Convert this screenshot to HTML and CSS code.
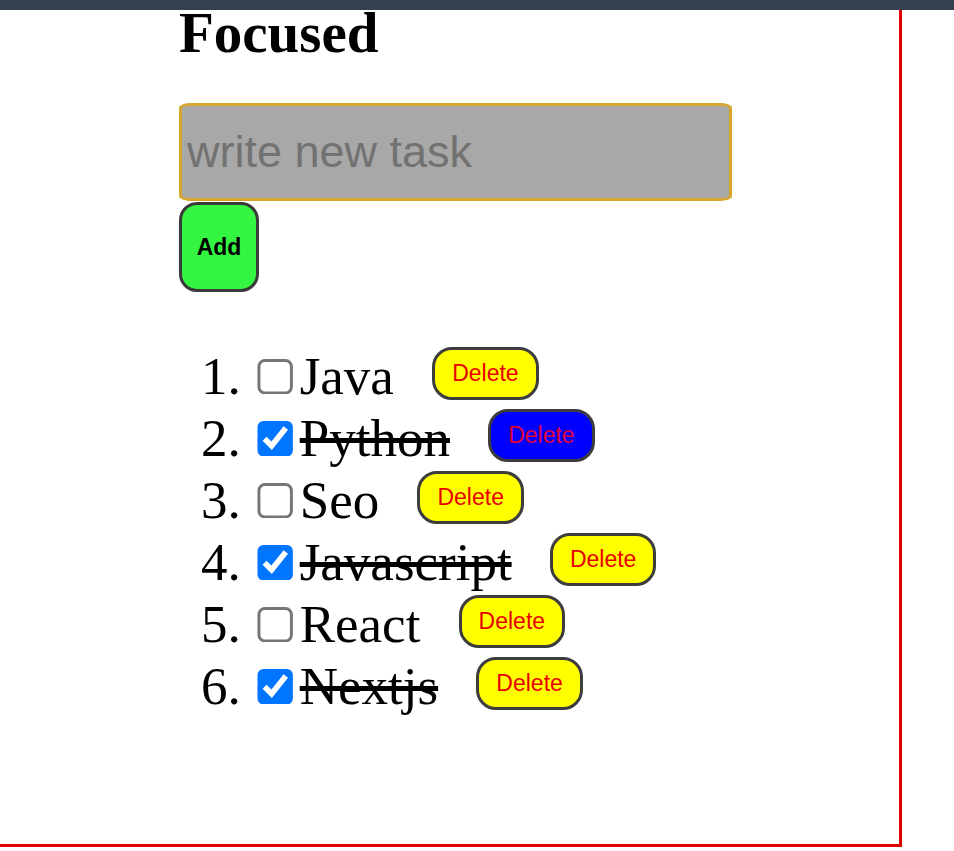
FILE: index.html
```html
<!DOCTYPE html>
<html lang="en">
<head>
<meta charset="utf-8">
<title>Focused</title>
<link rel="stylesheet" href="styles.css">
</head>
<body>
<div class="topbar"></div>
<div class="app">
  <h1 class="title">Focused</h1>
  <input class="task-input" type="text" placeholder="write new task">
  <button class="add-btn">Add</button>
  <ol class="tasks">
    <li><input class="check" type="checkbox"><span class="label">Java</span> <button class="del-btn">Delete</button></li>
    <li><input class="check" type="checkbox" checked><span class="label done">Python</span> <button class="del-btn hover">Delete</button></li>
    <li><input class="check" type="checkbox"><span class="label">Seo</span> <button class="del-btn">Delete</button></li>
    <li><input class="check" type="checkbox" checked><span class="label done">Javascript</span> <button class="del-btn">Delete</button></li>
    <li><input class="check" type="checkbox"><span class="label">React</span> <button class="del-btn">Delete</button></li>
    <li><input class="check" type="checkbox" checked><span class="label done">Nextjs</span> <button class="del-btn">Delete</button></li>
  </ol>
</div>
</body>
</html>
```
FILE: styles.css
```css
html, body {
  margin: 0;
  padding: 0;
  background: #ffffff;
  font-family: "Liberation Serif", "Times New Roman", serif;
  color: #000;
}

.topbar {
  position: fixed;
  top: 0;
  left: 0;
  right: 0;
  height: 10px;
  background: #343f50;
  z-index: 10;
}

.app {
  box-sizing: border-box;
  width: 902px;
  height: 847px;
  padding-left: 179px;
  border-right: 3px solid #e10000;
  border-bottom: 3px solid #e10000;
  overflow: hidden;
}

.title {
  margin: 0 0 38px;
  font-size: 57px;
  font-weight: bold;
  line-height: normal;
}

.task-input {
  display: block;
  box-sizing: border-box;
  width: 553px;
  height: 98px;
  margin: 0;
  padding: 0 5px;
  background: #a8a8a8;
  border: 3px solid #d6a530;
  border-radius: 12px / 5px;
  font-family: "Liberation Sans", Arial, sans-serif;
  font-size: 45px;
  color: #333;
  outline: none;
}

.task-input::placeholder {
  color: #727272;
}

.add-btn {
  display: block;
  box-sizing: border-box;
  width: 80px;
  height: 90px;
  margin: 1px 0 0;
  padding: 0;
  background: #33f542;
  border: 3px solid #3a3a3a;
  border-radius: 18px;
  font-family: "Liberation Sans", Arial, sans-serif;
  font-weight: bold;
  font-size: 23px;
  color: #000;
}

.tasks {
  margin: 53px 0 0;
  padding-left: 75px;
  font-size: 53px;
}

.tasks li {
  line-height: 62px;
}

.check {
  zoom: 2.95;
  margin: 0 1.7px 0 0.8px;
  vertical-align: -1px;
}

.label.done {
  text-decoration: line-through;
}

.del-btn {
  margin-left: 25px;
  padding: 10px 17px;
  background: #ffff00;
  border: 3px solid #3d3d3d;
  border-radius: 20px;
  font-family: "Liberation Sans", Arial, sans-serif;
  font-size: 23px;
  line-height: normal;
  color: #e80000;
  vertical-align: text-top;
}

.del-btn.hover {
  background: #0000ff;
  color: #e0003a;
}
```
